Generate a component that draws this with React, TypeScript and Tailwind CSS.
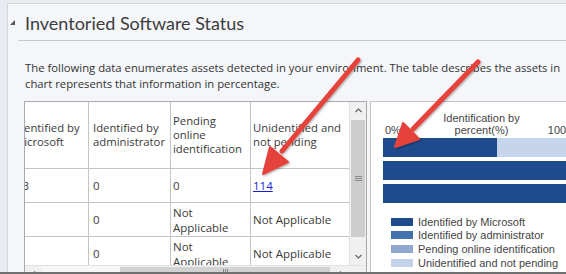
import React from "react";

const ui = { fontFamily: '"Open Sans", "Noto Sans", sans-serif' };
const chartFont = { fontFamily: '"Liberation Sans", Arial, sans-serif' };
const titleFont = { fontFamily: 'Lato, "Open Sans", sans-serif' };

function Chevron({ dir }: { dir: "up" | "down" | "left" | "right" }) {
  const rot = { up: 0, down: 180, left: 270, right: 90 }[dir];
  return (
    <svg width="9" height="9" viewBox="0 0 9 9" style={{ transform: `rotate(${rot}deg)` }}>
      <path d="M1.5 6 L4.5 3 L7.5 6" fill="none" stroke="#606060" strokeWidth="1.1" />
    </svg>
  );
}

function HeaderCell({ w, pl, lines, border = true }: { w: string; pl: string; lines: string[]; border?: boolean }) {
  return (
    <div className={`${w} ${pl} shrink-0 h-full ${border ? "border-r border-[#c4c4c4]" : ""} flex flex-col justify-center text-[11.3px] leading-[14px] text-[#3a3a3a] overflow-hidden`}>
      {lines.map((l, i) => (
        <div key={i} className="whitespace-nowrap">{l}</div>
      ))}
    </div>
  );
}

function Cell({ w, pl, children, border = true }: { w: string; pl: string; children?: React.ReactNode; border?: boolean }) {
  return (
    <div className={`${w} ${pl} shrink-0 h-full ${border ? "border-r border-[#c4c4c4]" : ""} flex flex-col justify-center text-[11.5px] leading-[15px] text-[#3a3a3a] overflow-hidden`}>
      {children}
    </div>
  );
}

export default function App() {
  return (
    <div className="relative w-[566px] h-[274px] overflow-hidden bg-[#e8ebef] border-b-2 border-[#707070] box-border" style={ui}>
      <div className="mt-[3px] ml-[7px] h-[300px] border-l border-t border-[#d3d7dc] bg-[#f4f6f9]">
        {/* title */}
        <div className="flex items-center h-[36px]">
          <svg width="5" height="5" viewBox="0 0 5 5" className="ml-[2px] mt-[1px]">
            <polygon points="5,0 5,5 0,5" fill="#555" />
          </svg>
          <div className="ml-[10px] mt-[1px] text-[18px] leading-[26px] text-[#3d3d3d] whitespace-nowrap" style={titleFont}>Inventoried Software Status</div>
        </div>
        <div className="ml-[10px] h-px bg-[#c5cad0]" />
        {/* description */}
        <div className="pl-[17px] pt-[19px] text-[11.3px] leading-[16px] text-[#333] whitespace-nowrap">
          <div>The following data enumerates assets detected in your environment. The table describes the assets in</div>
          <div>chart represents that information in percentage.</div>
        </div>
        {/* table + chart */}
        <div className="flex mt-[9px] ml-[16px]">
          <div className="w-[343px] shrink-0 border border-[#a9a9a9] bg-white flex flex-col h-[190px]">
            <div className="flex h-[163px]">
              <div className="w-[325px] overflow-hidden">
                <div className="-ml-[16px] w-[341px]">
                  {/* header */}
                  <div className="flex h-[67px] border-b border-[#c4c4c4]">
                    <HeaderCell w="w-[80px]" pl="pl-[5px]" lines={["Identified by", "Microsoft"]} />
                    <HeaderCell w="w-[82px]" pl="pl-[4px]" lines={["Identified by", "administrator"]} />
                    <HeaderCell w="w-[80px]" pl="pl-[2px]" lines={["Pending", "online", "identification"]} />
                    <HeaderCell w="w-[99px]" pl="pl-[2px]" lines={["Unidentified and", "not pending"]} border={false} />
                  </div>
                  {/* row 1 */}
                  <div className="flex h-[34px] border-b border-[#c4c4c4]">
                    <Cell w="w-[80px]" pl="pl-[7px]"><span>93</span></Cell>
                    <Cell w="w-[82px]" pl="pl-[4px]"><span>0</span></Cell>
                    <Cell w="w-[80px]" pl="pl-[2px]"><span>0</span></Cell>
                    <Cell w="w-[99px]" pl="pl-[2px]" border={false}>
                      <span className="text-[#1a1ad6] underline">114</span>
                    </Cell>
                  </div>
                  {/* row 2 */}
                  <div className="flex h-[34px] border-b border-[#c4c4c4]">
                    <Cell w="w-[80px]" pl="pl-[5px]" />
                    <Cell w="w-[82px]" pl="pl-[4px]"><span>0</span></Cell>
                    <Cell w="w-[80px]" pl="pl-[2px]"><span>Not</span><span>Applicable</span></Cell>
                    <Cell w="w-[99px]" pl="pl-[2px]" border={false}><span className="whitespace-nowrap">Not Applicable</span></Cell>
                  </div>
                  {/* row 3 */}
                  <div className="flex h-[34px] border-b border-[#c4c4c4]">
                    <Cell w="w-[80px]" pl="pl-[5px]" />
                    <Cell w="w-[82px]" pl="pl-[4px]"><span>0</span></Cell>
                    <Cell w="w-[80px]" pl="pl-[2px]"><span>Not</span><span>Applicable</span></Cell>
                    <Cell w="w-[99px]" pl="pl-[2px]" border={false}><span className="whitespace-nowrap">Not Applicable</span></Cell>
                  </div>
                </div>
              </div>
              {/* vertical scrollbar */}
              <div className="w-[17px] shrink-0 bg-[#f0f0f0] border-l border-[#e2e2e2] flex flex-col">
                <div className="h-[17px] flex items-center justify-center"><Chevron dir="up" /></div>
                <div className="h-[117px] mt-[1px] mx-[1px] bg-[#cdcdcd] flex items-center justify-center">
                  <svg width="7" height="7" viewBox="0 0 7 7">
                    <path d="M0 1.5H7M0 3.5H7M0 5.5H7" stroke="#8a8a8a" strokeWidth="1" />
                  </svg>
                </div>
                <div className="flex-1" />
                <div className="h-[17px] flex items-center justify-center"><Chevron dir="down" /></div>
              </div>
            </div>
            {/* horizontal scrollbar */}
            <div className="flex h-[17px] bg-[#f0f0f0] border-t border-[#e2e2e2]">
              <div className="w-[17px] flex items-center justify-center"><Chevron dir="left" /></div>
              <div className="w-[78px] bg-[#f7f7f7]" />
              <div className="w-[210px] mt-[1px] bg-[#d2d2d2] flex justify-center">
                <svg width="7" height="7" viewBox="0 0 7 7" className="mt-[2px]">
                  <path d="M1.5 0V7M3.5 0V7M5.5 0V7" stroke="#8a8a8a" strokeWidth="1" />
                </svg>
              </div>
              <div className="w-[3px]" />
              <div className="w-[17px] flex items-center justify-center"><Chevron dir="right" /></div>
              <div className="flex-1 bg-[#f0f0f0]" />
            </div>
          </div>
          {/* chart */}
          <div className="ml-[3px] w-[240px] shrink-0 h-[190px] border border-[#c3c3c3] bg-white" style={chartFont}>
            <div className="pl-[12px] pt-[10px]">
              <div className="w-[197px] grid grid-cols-[1fr_auto_1fr] items-end text-[11px] leading-[12px] text-[#444]">
                <div className="pl-[2px]">0%</div>
                <div className="text-center">
                  <div>Identification by</div>
                  <div>percent(%)</div>
                </div>
                <div className="text-right pr-[4px]">100%</div>
              </div>
              <div className="mt-[2px] w-[197px] flex flex-col gap-[4px]">
                <div className="h-[19px] flex">
                  <div className="w-[114px] bg-[#1e4b8e]" />
                  <div className="flex-1 bg-[#c7d5ec]" />
                </div>
                <div className="h-[19px] bg-[#1e4b8e]" />
                <div className="h-[19px] bg-[#1e4b8e]" />
              </div>
              <div className="mt-[12px] pl-[8px] text-[11px] text-[#444]">
                {[
                  ["bg-[#1e4b8e]", "Identified by Microsoft"],
                  ["bg-[#4472b0]", "Identified by administrator"],
                  ["bg-[#8ea8d2]", "Pending online identification"],
                  ["bg-[#c4d3eb]", "Unidentified and not pending"],
                ].map(([c, t]) => (
                  <div key={t} className="h-[13.6px] flex items-center">
                    <div className={`w-[22px] h-[8px] ${c}`} />
                    <div className="ml-[5px] whitespace-nowrap leading-[12px]">{t}</div>
                  </div>
                ))}
              </div>
            </div>
          </div>
        </div>
      </div>

      {/* annotation arrows */}
      <svg className="absolute inset-0 pointer-events-none" width="566" height="274" viewBox="0 0 566 274">
        <defs>
          <filter id="sh" x="-20%" y="-20%" width="140%" height="140%">
            <feDropShadow dx="1" dy="1" stdDeviation="1.2" floodColor="#000" floodOpacity="0.35" />
          </filter>
        </defs>
        <g filter="url(#sh)" fill="#e5423b" stroke="#e5423b" strokeLinecap="round" strokeLinejoin="round">
          <line x1="358" y1="60" x2="282" y2="151" strokeWidth="5" />
          <polygon points="263,174 288,162 270,147" strokeWidth="2" />
          <line x1="478" y1="62" x2="413" y2="129" strokeWidth="5" />
          <polygon points="395,147 419,139 403,123" strokeWidth="2" />
        </g>
      </svg>
    </div>
  );
}
